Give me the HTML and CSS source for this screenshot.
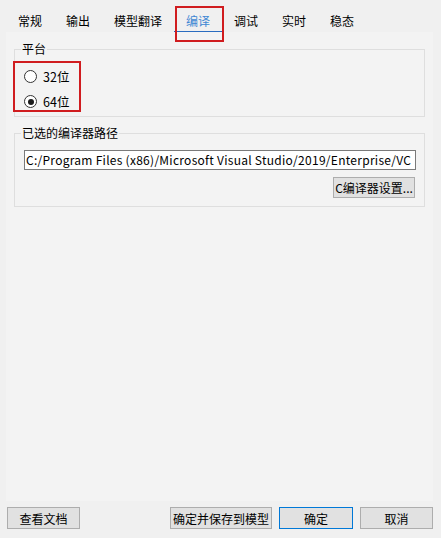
FILE: index.html
```html
<!DOCTYPE html>
<html lang="zh-CN">
<head>
    <meta charset="UTF-8">
    <meta name="viewport" content="width=device-width, initial-scale=1.0">
    <title>编译设置</title>
    <link rel="stylesheet" href="styles.css">
</head>
<body>
    <div class="dialog">
        <div class="tabs">
            <div class="tab">常规</div>
            <div class="tab">输出</div>
            <div class="tab">模型翻译</div>
            <div class="tab active">编译</div>
            <div class="tab">调试</div>
            <div class="tab">实时</div>
            <div class="tab">稳态</div>
        </div>

        <div class="panel">
            <fieldset class="group">
                <legend>平台</legend>
                <label class="radio-row">
                    <span class="radio"></span>
                    <span>32位</span>
                </label>
                <label class="radio-row">
                    <span class="radio checked"></span>
                    <span>64位</span>
                </label>
            </fieldset>

            <fieldset class="group path-group">
                <legend>已选的编译器路径</legend>
                <div class="path-input">C:/Program Files (x86)/Microsoft Visual Studio/2019/Enterprise/VC</div>
                <div class="path-actions">
                    <button class="btn small">C编译器设置...</button>
                </div>
            </fieldset>
        </div>

        <div class="footer">
            <button class="btn docs">查看文档</button>
            <button class="btn save">确定并保存到模型</button>
            <button class="btn ok">确定</button>
            <button class="btn cancel">取消</button>
        </div>

        <div class="mark mark-tab"></div>
        <div class="mark mark-radio"></div>
    </div>
</body>
</html>
```

FILE: styles.css
```css
body {
    margin: 0;
    background: #f0f0f0;
    font-family: "Noto Sans CJK SC", "Noto Sans", sans-serif;
    font-size: 12px;
    color: #000;
}

.dialog {
    position: relative;
    display: flex;
    flex-direction: column;
    width: 441px;
    height: 538px;
}

.tabs {
    display: flex;
    height: 32px;
    padding-left: 6px;
}

.tab {
    padding: 12px 12px 0 12px;
    line-height: 18px;
    box-sizing: border-box;
    height: 32px;
}

.tab.active {
    color: #3e87d3;
    border-bottom: 1px solid #2a6cc0;
}

.panel {
    flex: 1;
    margin: 0 8px 0 6px;
    padding: 8px 8px 0 8px;
    background: #f3f3f3;
}

.group {
    margin: 0;
    padding: 6px 8px 2px 9px;
    border: 1px solid #dedede;
    min-width: 0;
}

.group legend {
    padding: 0 1px;
    margin-left: -3px;
    line-height: 18px;
}

.radio-row {
    display: flex;
    align-items: center;
    height: 25px;
    font-size: 12.5px;
}

.radio {
    width: 11px;
    height: 11px;
    border: 1px solid #333;
    border-radius: 50%;
    background: #fff;
    margin-right: 6px;
    display: flex;
    align-items: center;
    justify-content: center;
}

.radio.checked::after {
    content: "";
    width: 6px;
    height: 6px;
    border-radius: 50%;
    background: #1a1a1a;
}

.path-group {
    margin-top: 7px;
    padding: 8px 8px 8px 9px;
}

.path-input {
    height: 18px;
    line-height: 18px;
    border: 1px solid #7a7a7a;
    background: #fff;
    padding: 0 1px;
    letter-spacing: 0.27px;
    white-space: nowrap;
    overflow: hidden;
}

.path-actions {
    display: flex;
    justify-content: flex-end;
    margin-top: 7px;
    padding-right: 1px;
}

.btn {
    font-family: inherit;
    font-size: 12px;
    color: #000;
    background: #e1e1e1;
    border: 1px solid #adadad;
    height: 22px;
    padding: 0;
    margin: 0;
}

.btn.small {
    width: 82px;
    height: 21px;
}

.footer {
    display: flex;
    padding: 6px 8px 9px 7px;
    gap: 7px;
}

.docs { width: 73px; }
.save { width: 102px; margin-left: auto; }
.ok { width: 74px; border-color: #0078d7; }
.cancel { width: 73px; }

.mark {
    position: absolute;
    border: 2px solid #d01c1f;
}

.mark-tab {
    left: 175px;
    top: 6px;
    width: 45px;
    height: 32px;
}

.mark-radio {
    left: 13px;
    top: 61px;
    width: 64px;
    height: 47px;
}
```
